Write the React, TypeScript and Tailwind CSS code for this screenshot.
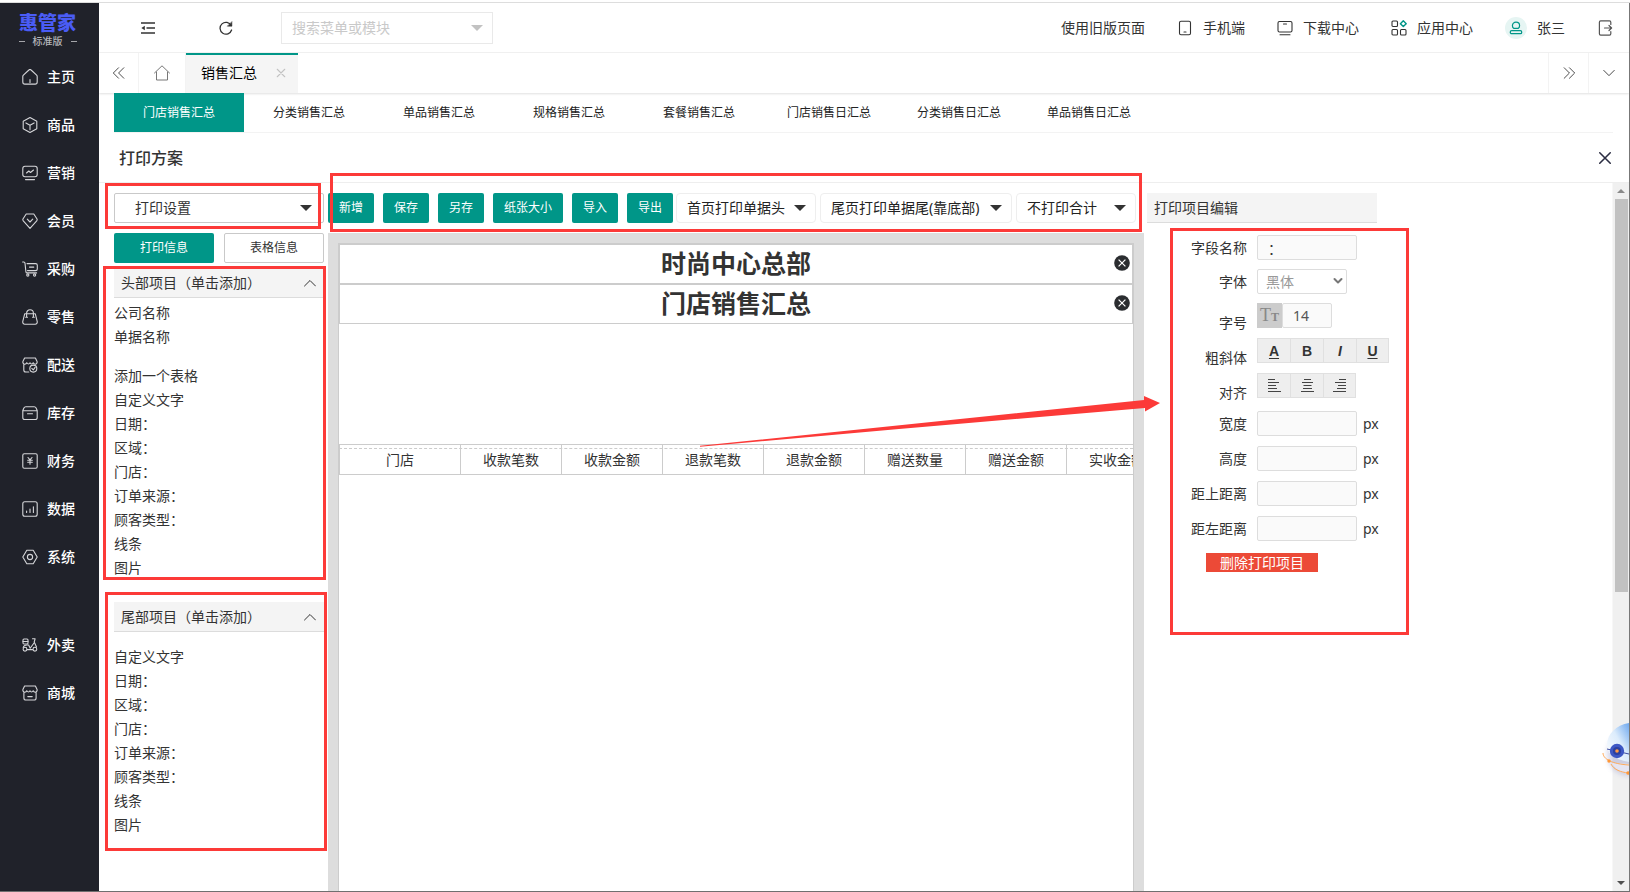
import type { ReactNode } from "react";

const line = {
  fill: "none",
  stroke: "currentColor",
  strokeLinecap: "round" as const,
  strokeLinejoin: "round" as const,
};

function Icon({ children, width = 1.1, size = "size-4" }: { children: ReactNode; width?: number; size?: string }) {
  return (
    <svg viewBox="0 0 16 16" className={`${size} shrink-0`} strokeWidth={width} aria-hidden="true" {...line}>
      {children}
    </svg>
  );
}

const mainNav: { label: string; icon: ReactNode }[] = [
  {
    label: "主页",
    icon: <path d="M.8 7.6c0-.6.2-1.1.6-1.5L6.900 1c.6-.6 1.600-.6 2.200 0l5.500 5.100c.4.4.6.9.6 1.500V13c0 1.200-.9 2.100-2.100 2.100H2.900C1.700 15.100.8 14.200.8 13zM8 10.500v3" />,
  },
  {
    label: "商品",
    icon: <path d="M8 .6l6.800 3.700v7.400L8 15.400l-6.800-3.700V4.300zM3.900 5.900L8 8.200l4.100-2.300M8 8.200v4.600" />,
  },
  {
    label: "营销",
    icon: <path d="M3 1.200h10c1.200 0 2.200 1 2.200 2.200v6.200c0 1.200-1 2.200-2.200 2.200H3c-1.200 0-2.200-1-2.200-2.200V3.400c0-1.200 1-2.200 2.200-2.200zM4.500 8l2.300-2 1.700 1.500L11.500 5M3.500 14.600h9" />,
  },
  {
    label: "会员",
    icon: <path d="M4.200 1h7.600l3.400 5.300c0 .8-.2 1.200-.5 1.600L8 15.400 1.300 7.900C1 7.500.8 7.100.8 6.300zM5.300 6.200L8 9l2.700-2.800" />,
  },
  {
    label: "采购",
    icon: (
      <>
        <path d="M.6 1h1.200c.7 0 1.100.5 1.200 1.100l.9 8.700c.1.700.6 1.100 1.200 1.100h9.500M5 2.600h8.600c1 0 1.700.7 1.700 1.700v3.600c0 1-.7 1.700-1.700 1.700H5.500M7.500 6.100h4.300" />
        <circle cx="5.800" cy="14" r="1.100" />
        <circle cx="12.600" cy="14" r="1.100" />
      </>
    ),
  },
  {
    label: "零售",
    icon: <path d="M2.700 4.800h10.600l1.900 7.600c.3 1.500-.6 2.800-2 2.800H2.800c-1.400 0-2.300-1.300-2-2.800zM4.600 8V4.200C4.600 2.200 6.100.8 8 .8s3.400 1.400 3.400 3.400V8M3.700 8.300h1.800M10.500 8.300h1.800" />,
  },
  {
    label: "配送",
    icon: (
      <>
        <path d="M1.800 7.600V13c0 1.200.8 2 2 2h3M2.600 1h10.800l1.700 3.500c.3 1.600-.6 2.700-1.900 2.700-1 0-1.700-.6-2-1.400M2.600 1L.9 4.500C.6 6.100 1.500 7.200 2.800 7.200c1 0 1.700-.6 2-1.400M4.800 5.800c1 1.500 2.400 1.500 3.200 0 .8 1.500 2.200 1.500 3.200 0" />
        <circle cx="11.300" cy="11.600" r="3.500" />
        <path d="M9.800 11.300l1.500 1.500 1.800-2.400" />
      </>
    ),
  },
  {
    label: "库存",
    icon: <path d="M3.800 1.800h8.400c.9 0 1.500.4 1.900 1.200l1.100 2.500v6.900c0 1.200-.9 2.100-2.100 2.100H2.900c-1.200 0-2.100-.9-2.100-2.100V5.500L1.900 3c.4-.8 1-1.200 1.900-1.200zM1 5.700h14M5.500 8.800h5" />,
  },
  {
    label: "财务",
    icon: (
      <>
        <rect x=".8" y=".8" width="14.400" height="14.400" rx="1.500" />
        <path d="M6 4.500l2 2.400 2-2.400M5.700 7.200h4.600M5.700 9.200h4.600M8 7v4.300" />
      </>
    ),
  },
  {
    label: "数据",
    icon: (
      <>
        <rect x=".8" y=".8" width="14.400" height="14.400" rx="2" />
        <path d="M4.600 10v1.500M8 8v3.500M11.400 5.800v5.700" />
      </>
    ),
  },
  {
    label: "系统",
    icon: (
      <>
        <path d="M4.800 1.300h6.400l4 6.700-4 6.700H4.800L.8 8z" />
        <circle cx="8" cy="8" r="2.600" />
      </>
    ),
  },
];

const extraNav: { label: string; icon: ReactNode }[] = [
  {
    label: "外卖",
    icon: (
      <>
        <rect x="1" y="2" width="5" height="5" rx="1" />
        <path d="M1 4.500h5M10.500 1.800h2.600l-.9 3.200 2.300 5M1.200 10.500C1.600 8.600 3 8 5 8h1.600l1.600 3.200L12 6M5.200 12.600h5.500" />
        <circle cx="3" cy="12.200" r="1.900" />
        <circle cx="12.900" cy="12.200" r="1.900" />
      </>
    ),
  },
  {
    label: "商城",
    icon: <path d="M1.900 7.400v5.500c0 1.200.9 2.100 2.100 2.100h8c1.200 0 2.100-.9 2.100-2.100V7.400M2.600 1h10.800l1.700 3.500c.3 1.600-.6 2.700-1.900 2.700-1 0-1.700-.6-2-1.400-1 1.500-2.400 1.500-3.200 0-.8 1.500-2.200 1.500-3.200 0-.3.800-1 1.400-2 1.400C1.500 7.200.6 6.100.9 4.500zM5.800 11.600h4.400" />,
  },
];

const reportTabs = ["门店销售汇总", "分类销售汇总", "单品销售汇总", "规格销售汇总", "套餐销售汇总", "门店销售日汇总", "分类销售日汇总", "单品销售日汇总"];
const commonFields = ["自定义文字", "日期：", "区域：", "门店：", "订单来源：", "顾客类型：", "线条", "图片"];
const columns = ["收款笔数", "收款金额", "退款笔数", "退款金额", "赠送数量", "赠送金额", "实收金额"];

function NavItem({ label, icon }: { label: string; icon: ReactNode }) {
  return (
    <a href="#" className="flex h-12 items-center gap-[9px] pl-[22px] text-sm font-medium text-white">
      <span className="text-[#d5d6d9]">
        <Icon>{icon}</Icon>
      </span>
      {label}
    </a>
  );
}

function Caret({ className }: { className: string }) {
  return (
    <svg viewBox="0 0 12 6" className={`pointer-events-none absolute top-1/2 h-1.5 w-3 -translate-y-1/2 ${className}`} aria-hidden="true">
      <path d="M0 0h12L6 6z" fill="currentColor" />
    </svg>
  );
}

function ToolSelect({ text, className }: { text: string; className: string }) {
  return (
    <div className={`relative h-[30px] shrink-0 ${className}`}>
      <select aria-label={text} className="size-full appearance-none rounded-sm border border-[#eee] bg-white pl-2.5 text-sm text-[#222]">
        <option>{text}</option>
      </select>
      <Caret className="right-2.5 text-[#333]" />
    </div>
  );
}

function ToolButton({ children }: { children: ReactNode }) {
  return <button className="h-[30px] shrink-0 rounded-[2px] bg-[#009688] px-[11px] text-xs text-white">{children}</button>;
}

function Outline({ className }: { className: string }) {
  return <div className={`pointer-events-none absolute z-10 border-3 border-[#fc3a38] ${className}`} />;
}

function GroupHeader({ children }: { children: ReactNode }) {
  return (
    <button className="flex h-[30px] w-full items-center justify-between border-b border-[#dcdcdc] bg-[#f4f4f4] pr-2 pl-[7px] text-sm">
      {children}
      <svg viewBox="0 0 12 8" className="h-2 w-3" strokeWidth="1" aria-hidden="true" {...line}>
        <path d="M.5 7L6 1.500 11.500 7" />
      </svg>
    </button>
  );
}

function FieldList({ items }: { items: string[] }) {
  return (
    <ul>
      {items.map((item) => (
        <li key={item} className="h-6">
          <button className="block text-sm leading-6">{item}</button>
        </li>
      ))}
    </ul>
  );
}

function TitleBlock({ children }: { children: string }) {
  return (
    <div className="relative h-10 border border-[#ccc]">
      <h3 className="text-center text-[25px] leading-9 font-bold text-[#333]">{children}</h3>
      <button aria-label={`移除${children}`} className="absolute top-2.5 right-0.5">
        <svg viewBox="0 0 16 16" className="size-4" aria-hidden="true">
          <circle cx="8" cy="8" r="7.800" fill="#2b2d30" />
          <path d="M4.600 4.600l6.800 6.800M11.400 4.600l-6.800 6.800" stroke="#fff" strokeWidth="1.200" />
        </svg>
      </button>
    </div>
  );
}

function PixelField({ id, label }: { id: string; label: string }) {
  return (
    <div className="flex h-[25px] items-center">
      <label htmlFor={id} className="w-[100px] pr-2.5 text-right">
        {label}
      </label>
      <input id={id} className="h-[25px] w-[100px] rounded-[2px] border border-[#ddd] bg-[#fafafa] px-2.5" />
      <span className="pl-1.5">px</span>
    </div>
  );
}

const styleButton = "flex h-[25px] w-[33px] items-center justify-center border-y border-l border-[#e0e0e0] bg-[#eee] last:border-r";

export default function App() {
  return (
    <div className="relative flex h-screen flex-col overflow-hidden border-b border-[#6f6f6f] bg-white pt-0.5 font-['Noto_Sans','Noto_Sans_CJK_SC',sans-serif] text-sm text-[#333]">
      <div className="flex min-h-0 flex-1 border-t border-[#ddd]">
        <aside className="flex w-[99px] shrink-0 flex-col bg-[#20222a]">
          <div className="flex h-[50px] flex-col items-center pt-2 pr-1">
            <span className="text-[19px] leading-6 font-black text-[#4a5cf5]">惠管家</span>
            <span className="flex items-center gap-2 text-[10px] leading-3 font-medium text-[#b4b5b9]">
              <i className="h-px w-1.5 bg-[#a5a6aa]" />
              标准版
              <i className="h-px w-1.5 bg-[#a5a6aa]" />
            </span>
          </div>
          <nav>
            {mainNav.map((item) => (
              <NavItem key={item.label} {...item} />
            ))}
            <div className="pt-10">
              {extraNav.map((item) => (
                <NavItem key={item.label} {...item} />
              ))}
            </div>
          </nav>
        </aside>

        <main className="flex min-w-0 flex-1 flex-col">
          <header className="flex h-[50px] shrink-0 items-center border-b border-[#f2f2f2] pr-4">
            <button aria-label="收起菜单" className="ml-[42px]">
              <svg viewBox="0 0 14 12" className="h-3 w-3.5" fill="none" stroke="#333" strokeWidth="1.300" aria-hidden="true">
                <path d="M0 1h14M5.500 6H14M0 11h14" />
                <path d="M3.800 3.800v4.400L.4 6z" fill="#333" stroke="none" />
              </svg>
            </button>
            <button aria-label="刷新" className="ml-16">
              <svg viewBox="0 0 14 14" className="size-3.5" strokeWidth="1.300" aria-hidden="true" {...line}>
                <path d="M12.200 4.500A5.900 5.900 0 1 0 12.600 9" />
                <path d="M12.900.9v4.300H8.600z" fill="currentColor" strokeWidth=".5" />
              </svg>
            </button>
            <div className="relative ml-12 h-8 w-[212px]">
              <input aria-label="搜索菜单或模块" placeholder="搜索菜单或模块" className="size-full border border-[#e9e9e9] pl-2.5 text-sm placeholder:text-[#c9c9c9]" />
              <Caret className="right-2.5 text-[#c2c2c2]" />
            </div>
            <div className="ml-auto flex items-center">
              <a href="#">使用旧版页面</a>
              <a href="#" className="ml-8 flex items-center gap-2.5">
                <Icon>
                  <rect x="2.500" y="1.200" width="11" height="13.600" rx="1.500" />
                  <path d="M7 12h2" />
                </Icon>
                手机端
              </a>
              <a href="#" className="ml-8 flex items-center gap-2.5">
                <Icon>
                  <rect x="1" y="1.500" width="14" height="10.500" rx="1.500" />
                  <path d="M6.500 4h3M3 14.700h10" />
                </Icon>
                下载中心
              </a>
              <a href="#" className="ml-8 flex items-center gap-2.5">
                <Icon>
                  <rect x="1" y="1" width="5.500" height="5.500" rx="1" />
                  <rect x="1" y="9.500" width="5.500" height="5.500" rx="1" />
                  <rect x="9.500" y="9.500" width="5.500" height="5.500" rx="1" />
                  <path d="M12.300.8l2.900 2.900-2.900 2.900-2.900-2.900z" stroke="#009688" strokeWidth="1.400" />
                </Icon>
                应用中心
              </a>
              <a href="#" className="ml-8 flex items-center gap-2.5">
                <span className="flex size-[22px] items-center justify-center rounded-full bg-[#e6f5f3] text-[#009688]">
                  <Icon size="size-3.5" width={1.400}>
                    <path d="M5.600 8.500C4.500 7.800 3.900 6.700 3.900 5.300 3.900 3 5.700 1.300 8 1.300s4.100 1.700 4.100 4c0 1.400-.6 2.500-1.700 3.200z" />
                    <rect x="1.500" y="11" width="13" height="3.500" rx="1.500" />
                  </Icon>
                </span>
                张三
              </a>
              <button aria-label="退出" className="ml-8 text-[#555]">
                <Icon width={1.200}>
                  <path d="M13.800 4.500V2.200c0-.8-.5-1.300-1.300-1.300H3.700c-.8 0-1.300.5-1.300 1.300v11.600c0 .8.500 1.300 1.300 1.300h8.800c.8 0 1.300-.5 1.300-1.300v-2.300M7.500 8h7M12 5.500L14.600 8 12 10.500" />
                </Icon>
              </button>
            </div>
          </header>

          <div className="flex h-10 shrink-0 shadow-[0_1px_2px_rgba(0,0,0,0.12)]">
            <button aria-label="向左" className="flex w-10 items-center justify-center border-r border-[#f3f3f3]">
              <Icon width={1} size="size-3.5">
                <path d="M7.500 2l-6 6 6 6M13.500 2l-6 6 6 6" />
              </Icon>
            </button>
            <button aria-label="首页" className="flex w-[47px] items-center justify-center border-r border-[#f3f3f3] text-[#777]">
              <Icon width={1}>
                <path d="M.5 8L8 .8 15.500 8M2.500 7v8h11V7" />
              </Icon>
            </button>
            <div className="flex w-28 items-center border-t-2 border-[#009688] bg-[#f5f5f5] pb-0.5 pl-[15px] text-black">
              销售汇总
              <button aria-label="关闭标签" className="ml-[19px] text-[#c2c2c2]">
                <Icon size="size-2.5" width={1.700}>
                  <path d="M2 2l12 12M14 2L2 14" />
                </Icon>
              </button>
            </div>
            <button aria-label="向右" className="ml-auto flex w-10 items-center justify-center border-l border-[#f3f3f3]">
              <Icon width={1} size="size-3.5">
                <path d="M2.500 2l6 6-6 6M8.500 2l6 6-6 6" />
              </Icon>
            </button>
            <button aria-label="更多" className="flex w-[41px] items-center justify-center border-l border-[#f3f3f3]">
              <Icon width={1.200} size="size-3">
                <path d="M1 4.500l7 7 7-7" />
              </Icon>
            </button>
          </div>

          <nav className="mr-4 ml-[15px] flex h-10 shrink-0 border-b border-[#f3f3f3] text-xs">
            {reportTabs.map((tab, index) => (
              <a
                key={tab}
                href="#"
                className={index === 0 ? "flex w-[130px] items-center justify-center bg-[#009688] text-white" : "flex w-[130px] items-center justify-center text-[#222]"}
              >
                {tab}
              </a>
            ))}
          </nav>

          <div className="flex h-[50px] shrink-0 items-center justify-between border-b border-[#eee] pr-[17px] pl-5">
            <h2 className="text-base font-medium">打印方案</h2>
            <button aria-label="关闭" className="text-[#2b2d42]">
              <Icon size="size-3.5" width={1.800}>
                <path d="M2 2l12 12M14 2L2 14" />
              </Icon>
            </button>
          </div>

          <div className="flex min-h-0 flex-1">
            <section className="relative w-[229px] shrink-0 pt-2.5 pr-1 pl-[15px]">
              <Outline className="top-0 left-1.5 h-[46px] w-[216px]" />
              <div className="relative h-[30px]">
                <select aria-label="打印设置" className="size-full appearance-none rounded-[2px] border border-[#c9c9c9] bg-white pl-5 text-sm">
                  <option>打印设置</option>
                </select>
                <Caret className="right-3 text-[#333]" />
              </div>
              <div className="mt-2.5 grid grid-cols-2 gap-2.5 text-xs">
                <button className="h-[30px] rounded-[2px] bg-[#009688] text-white">打印信息</button>
                <button className="h-[30px] rounded-[2px] border border-[#c9c9c9]">表格信息</button>
              </div>
              <div className="relative mt-[5px] space-y-[3px]">
                <Outline className="-top-0.5 -right-0.5 -bottom-[3px] -left-[11px]" />
                <GroupHeader>头部项目（单击添加）</GroupHeader>
                <div className="space-y-[15px]">
                  <FieldList items={["公司名称", "单据名称"]} />
                  <FieldList items={["添加一个表格", ...commonFields]} />
                </div>
              </div>
              <div className="relative mt-[22px] pb-3">
                <Outline className="-top-2.5 -right-[3px] -bottom-0.5 -left-[9px]" />
                <GroupHeader>尾部项目（单击添加）</GroupHeader>
                <div className="pt-[13px]">
                  <FieldList items={commonFields} />
                </div>
              </div>
            </section>

            <section className="relative flex w-[816px] shrink-0 flex-col pt-2.5">
              <Outline className="-top-2.5 left-0.5 h-[59px] w-[812px]" />
              <div className="flex shrink-0 gap-[3px]">
                <div className="flex gap-[9px]">
                  <ToolButton>新增</ToolButton>
                  <ToolButton>保存</ToolButton>
                  <ToolButton>另存</ToolButton>
                  <ToolButton>纸张大小</ToolButton>
                  <ToolButton>导入</ToolButton>
                  <ToolButton>导出</ToolButton>
                </div>
                <div className="flex gap-1">
                  <ToolSelect text="首页打印单据头" className="w-[140px]" />
                  <ToolSelect text="尾页打印单据尾(靠底部)" className="w-48" />
                  <ToolSelect text="不打印合计" className="w-[120px]" />
                </div>
              </div>
              <div className="mt-2.5 flex min-h-0 flex-1 flex-col bg-[#ddd] px-2.5 pt-2.5">
                <div className="flex-1 overflow-hidden border border-b-0 border-[#ccc] bg-white">
                  <TitleBlock>时尚中心总部</TitleBlock>
                  <TitleBlock>门店销售汇总</TitleBlock>
                  <div className="relative mt-[120px]">
                    <table className="w-[828px] table-fixed border-collapse text-center font-['Liberation_Serif','Noto_Sans_CJK_SC',serif] text-sm">
                      <thead>
                        <tr className="h-[30px]">
                          <th className="w-[121px] border border-[#ccc] p-0 pt-0.5 font-normal">门店</th>
                          {columns.map((column) => (
                            <th key={column} className="w-[101px] border border-[#ccc] p-0 pt-0.5 font-normal">
                              {column}
                            </th>
                          ))}
                        </tr>
                      </thead>
                    </table>
                    <div className="absolute inset-x-0 top-1 border-t border-dashed border-[#ccc]" />
                  </div>
                </div>
              </div>
              <svg viewBox="0 0 462 52" className="pointer-events-none absolute top-[213px] left-[371px] z-10 h-[52px] w-[462px]" aria-hidden="true">
                <path d="M1 49.800L445 4V0l16 7-15 8.500V12L200 33 1 50.800z" fill="#fc3a38" />
              </svg>
            </section>

            <section className="min-w-0 flex-1 pt-2.5 pl-[3px]">
              <h3 className="flex h-[30px] w-[230px] items-center border-b border-[#dcdcdc] bg-[#f4f4f4] pl-[7px]">打印项目编辑</h3>
              <form className="relative ml-[10px] flex flex-col gap-2.5 pt-3">
                <Outline className="top-[5px] left-[13px] h-[407px] w-[239px]" />
                <div className="flex flex-col gap-[9px]">
                  <div className="flex h-[25px] items-center">
                    <label htmlFor="name" className="w-[100px] pr-2.5 text-right">
                      字段名称
                    </label>
                    <input id="name" defaultValue="：" className="h-[25px] w-[100px] rounded-[2px] border border-[#ddd] bg-[#fafafa] px-2.5" />
                  </div>
                  <div className="flex h-[25px] items-center">
                    <label htmlFor="face" className="w-[100px] pr-2.5 text-right">
                      字体
                    </label>
                    <div className="relative h-[25px] w-[90px]">
                      <select id="face" disabled className="size-full appearance-none rounded-[2px] border border-[#ddd] bg-white pl-2 text-sm text-[#999] opacity-100">
                        <option>黑体</option>
                      </select>
                      <svg viewBox="0 0 10 8" className="pointer-events-none absolute top-2 right-1 h-2 w-2.5 text-[#777]" strokeWidth="2" aria-hidden="true" {...line}>
                        <path d="M1.500 2L5 5.500 8.500 2" />
                      </svg>
                    </div>
                  </div>
                  <div className="flex h-[25px]">
                    <label htmlFor="size" className="w-[100px] pt-2.5 pr-2.5 text-right">
                      字号
                    </label>
                    <span className="flex h-[25px] w-[25px] items-baseline justify-center bg-[#ccc] font-['Liberation_Serif',serif] text-[18px] leading-[25px] text-[#888]" aria-hidden="true">
                      T<span className="text-xs font-bold">T</span>
                    </span>
                    <input id="size" defaultValue="14" className="h-[25px] w-[50px] rounded-[2px] border border-[#ddd] bg-[#fafafa] px-2.5 text-[#555]" />
                  </div>
                </div>
                <div className="flex h-[25px] font-['Liberation_Sans','Noto_Sans_CJK_SC',sans-serif]" role="group" aria-label="粗斜体">
                  <span className="w-[100px] pt-2.5 pr-2.5 text-right">粗斜体</span>
                  <div className="flex font-bold">
                    <button type="button" className={styleButton}>
                      <span className="underline underline-offset-2">A</span>
                    </button>
                    <button type="button" className={styleButton}>B</button>
                    <button type="button" className={styleButton}>
                      <i>I</i>
                    </button>
                    <button type="button" className={styleButton}>
                      <span className="underline underline-offset-2">U</span>
                    </button>
                  </div>
                </div>
                <div className="flex h-[25px]" role="group" aria-label="对齐">
                  <span className="w-[100px] pt-2.5 pr-2.5 text-right">对齐</span>
                  <div className="flex">
                    <button type="button" aria-label="左对齐" className={styleButton}>
                      <svg viewBox="0 0 13 13" className="size-[13px]" stroke="#444" aria-hidden="true">
                        <path d="M0 .5h7M0 3.500h11M0 6.500h8M0 9.500h9M0 12.500h13" />
                      </svg>
                    </button>
                    <button type="button" aria-label="居中对齐" className={styleButton}>
                      <svg viewBox="0 0 13 13" className="size-[13px]" stroke="#444" aria-hidden="true">
                        <path d="M3 .5h7M1 3.500h11M2.500 6.500h8M2 9.500h9M0 12.500h13" />
                      </svg>
                    </button>
                    <button type="button" aria-label="右对齐" className={styleButton}>
                      <svg viewBox="0 0 13 13" className="size-[13px]" stroke="#444" aria-hidden="true">
                        <path d="M6 .5h7M2 3.500h11M5 6.500h8M4 9.500h9M0 12.500h13" />
                      </svg>
                    </button>
                  </div>
                </div>
                <div className="flex flex-col gap-2.5 pt-[3px]">
                  <PixelField id="width" label="宽度" />
                  <PixelField id="height" label="高度" />
                  <PixelField id="top" label="距上距离" />
                  <PixelField id="left" label="距左距离" />
                </div>
                <button type="button" className="mt-0.5 ml-[49px] h-[19px] w-28 bg-[#ec4a37] text-sm leading-[19px] text-white">
                  删除打印项目
                </button>
              </form>
            </section>

            <div className="flex w-[17px] shrink-0 flex-col items-center border-l border-[#f7f7f7] bg-[#f0f0f0] py-1.5" aria-hidden="true">
              <svg viewBox="0 0 8 4" className="h-1 w-2">
                <path d="M0 4h8L4 0z" fill="#8a8a8a" />
              </svg>
              <div className="mt-1.5 h-[56.4%] w-[13px] bg-[#c1c1c1]" />
              <svg viewBox="0 0 8 4" className="mt-auto h-1 w-2">
                <path d="M0 0h8L4 4z" fill="#505050" />
              </svg>
            </div>
          </div>
        </main>
        <div className="w-px shrink-0 bg-[#777]" />
      </div>

      <button aria-label="在线助手" className="absolute top-[718px] right-px z-20">
        <svg viewBox="0 0 28 62" className="h-[62px] w-7" aria-hidden="true">
          <defs>
            <linearGradient id="shell" x1="1" y1="0" x2="0" y2="1">
              <stop offset="0" stopColor="#6fa8ee" />
              <stop offset=".45" stopColor="#dcecfc" />
              <stop offset="1" stopColor="#ffffff" />
            </linearGradient>
            <filter id="soft" x="-50%" y="-50%" width="200%" height="200%">
              <feGaussianBlur stdDeviation="2.500" />
            </filter>
          </defs>
          <ellipse cx="28" cy="36" rx="22" ry="22" fill="#9a9ccc" opacity=".4" filter="url(#soft)" />
          <path d="M28 5C15 7 6 16 6 27c0 8 6 14 22 17z" fill="url(#shell)" />
          <path d="M11 45c3 7 10 10 17 11V46z" fill="#e6e5f2" />
          <path d="M6 31l22 5" stroke="#3b4aa0" strokeWidth="1" />
          <circle cx="16" cy="33" r="7.200" fill="#3d57c4" />
          <circle cx="16" cy="33" r="4" fill="#2c3f9f" />
          <circle cx="16" cy="33" r="1.800" fill="#ff9a45" />
          <path d="M2 35c0 6 9 11 26 12M10 46c3 6 10 8 17 9" fill="none" stroke="#ffab5c" strokeWidth="1" />
          <circle cx="8" cy="43" r="1.700" fill="#ff9838" />
          <circle cx="27" cy="55" r="1.700" fill="#ff9838" />
        </svg>
      </button>
    </div>
  );
}
